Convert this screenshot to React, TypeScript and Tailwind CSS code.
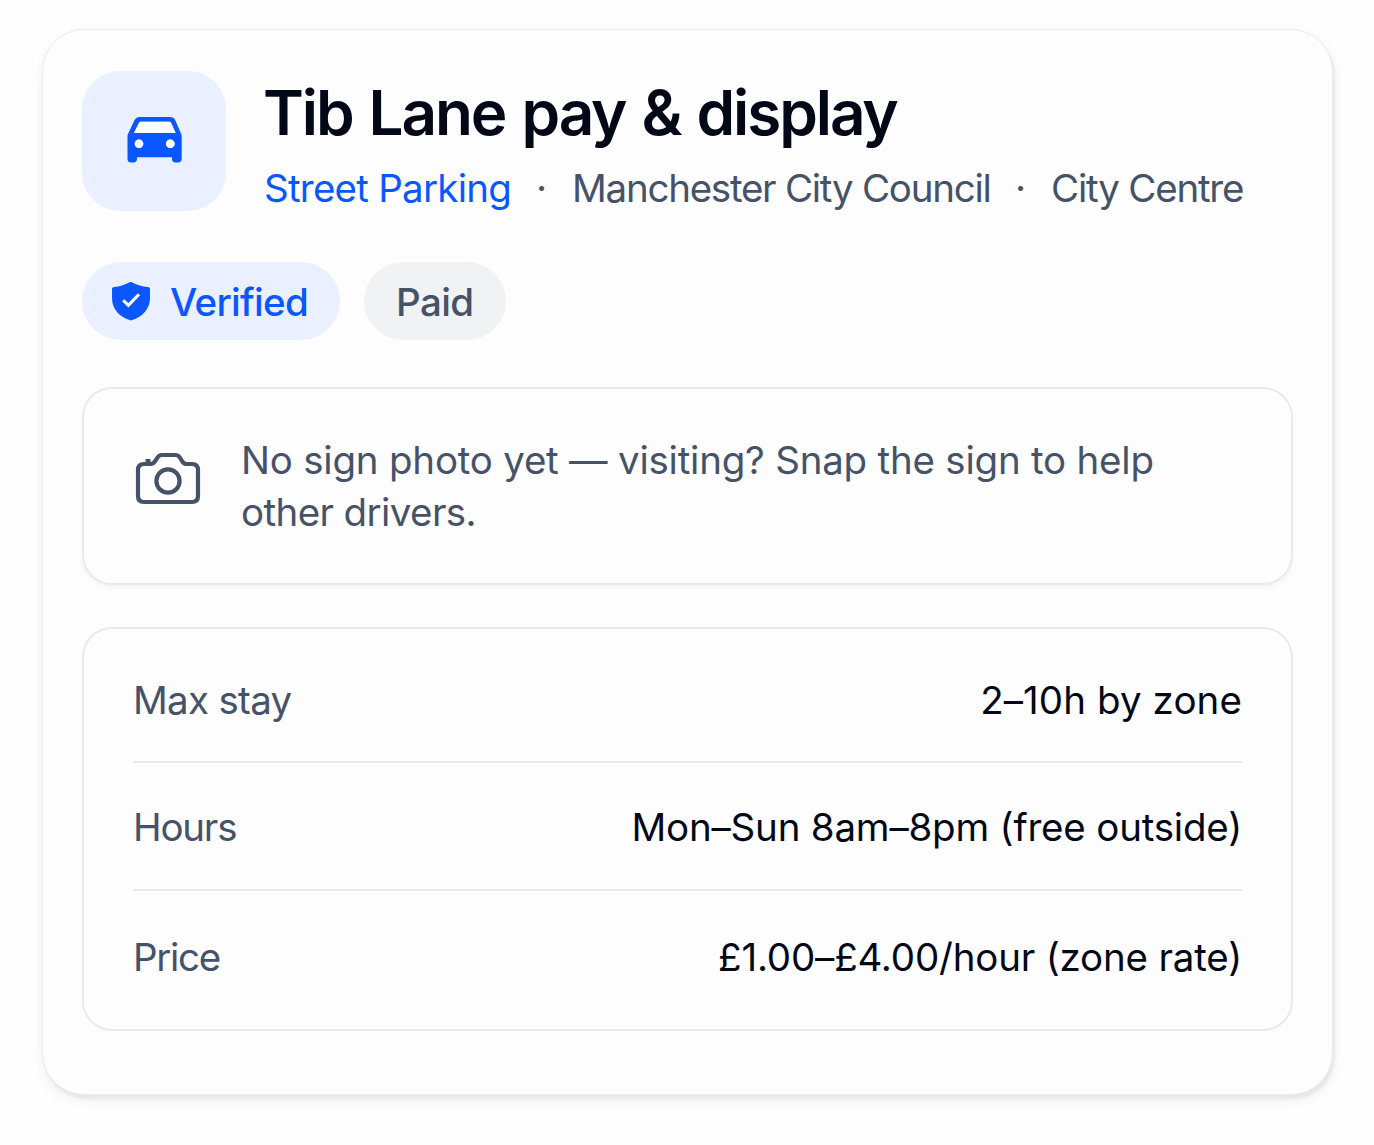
import React from "react";

function CarIcon() {
  return (
    <svg width="56" height="48" viewBox="0 0 56 48" className="ml-[2px] mt-[-2px]" aria-hidden="true">
      <path
        fill="#0b57ff"
        fillRule="evenodd"
        d="M12.8 1H43c3 0 4.500 1.300 5.500 3.800L54 17.500c.5 1 .7 1.700.7 3V43c0 2.200-1.600 3.600-3.600 3.600h-2.400c-2.600 0-3.700-1.400-3.700-3.600v-1.700H10V43c0 2.200-1.300 3.600-3.600 3.600H4C1.700 46.600.5 45.200.5 43V20.500c0-1.300.2-2 .7-3L7.200 4.800C8.300 2.300 9.800 1 12.800 1Zm.6 4.800c-.7 0-1 .3-1.300.9L7 17h41.600L44 6.700c-.3-.6-.6-.9-1.300-.9H13.400ZM12 23.400a4.300 4.300 0 1 0 0 8.600 4.300 4.300 0 0 0 0-8.600Zm31.300 0a4.300 4.300 0 1 0 0 8.600 4.300 4.300 0 0 0 0-8.600Z"
      />
      <g fill="#fbfcff">
        <path d="M13.400 5.800h29.300c.7 0 1 .3 1.300.9L48.600 17H7l5.100-10.300c.3-.6.600-.9 1.300-.9Z" />
        <circle cx="12" cy="27.700" r="4.300" />
        <circle cx="43.300" cy="27.700" r="4.300" />
      </g>
    </svg>
  );
}

function ShieldIcon() {
  return (
    <svg width="40" height="40" viewBox="0 0 40 40" className="shrink-0" aria-hidden="true">
      <path
        fill="#0b57ff"
        d="M18.600 1.200c.8-.4 1.500-.4 2.200 0 5 2.700 10.300 4.300 16 4.900 1.500.1 2.200.9 2.200 2.300V17c0 10.300-6.800 18.500-17.600 22.100-1 .4-1.900.4-2.800 0C7.500 35.300 1 27.300 1 17V8.400C1 7 1.600 6.200 3.100 6.100c5.500-.6 10.500-2.200 15.500-4.900Z"
      />
      <path fill="none" stroke="#fff" strokeWidth="3" d="m12.200 19.200 5.200 5.200L28 13.200" />
    </svg>
  );
}

function CameraIcon() {
  return (
    <svg
      width="68"
      height="56"
      viewBox="0 0 68 56"
      fill="none"
      stroke="#465268"
      strokeWidth="4.2"
      strokeLinejoin="round"
      className="shrink-0"
      aria-hidden="true"
    >
      <path d="M10 13h6.500c2.200 0 3.300-.8 4.500-2.600l2.600-4C24.800 4.600 26 4 28 4h13.500c2 0 3.200.7 4.300 2.500l2.500 4c1.200 1.800 2.300 2.500 4.500 2.500H58c3.900 0 6 2.100 6 6v26c0 4-2.100 6-6 6H10c-3.900 0-6-2-6-6V19c0-3.900 2.100-6 6-6Z" />
      <circle cx="34" cy="30" r="11.600" />
      <path d="M11.500 10.500h5" strokeWidth="5" />
    </svg>
  );
}

const rows = [
  { label: "Max stay", value: "2–10h by zone", height: "h-[110px] pb-[12px]", ls: "tracking-[-0.7px]", vs: "tracking-[0.1px]" },
  { label: "Hours", value: "Mon–Sun 8am–8pm (free outside)", height: "h-[126px] pt-[2px]", ls: "tracking-[-1.2px]", vs: "tracking-[-0.2px]" },
  { label: "Price", value: "£1.00–£4.00/hour (zone rate)", height: "h-[114px] pt-[18px]", ls: "tracking-[-1.3px]", vs: "tracking-[-0.18px]" },
];

export default function App() {
  return (
    <main className="h-[1145px] w-[1374px] bg-[#fefefe] pl-[42px] pt-[29px] font-['Inter',sans-serif] text-[38.5px] leading-[52px] text-[#465268]">
      <section className="h-[1066px] w-[1291px] rounded-[42px] border border-[#e9ebed] bg-[#fdfdfd] pl-[39px] pt-[41px] shadow-[2px_4px_2px_0px_#e7e9eb,1px_5px_12px_1px_rgba(15,23,42,0.06)]">
        <header className="flex h-[140px]">
          <div className="flex h-[140px] w-[144px] items-center justify-center rounded-[38px] bg-[#eaf0ff]">
            <CarIcon />
          </div>
          <div className="ml-[38px] pt-[4px]">
            <h1 className="-ml-px h-[76px] whitespace-nowrap text-[62px] font-semibold leading-[76px] tracking-[-2.1px] text-[#030817] [word-spacing:2.5px]">
              Tib Lane pay &amp; display
            </h1>
            <div className="mt-[11px] flex h-[52px] whitespace-nowrap">
              <span className="w-[307px] tracking-[-0.75px] text-[#0b57ff]">
                Street Parking
              </span>
              <span className="-ml-[35px] w-[36px]">·</span>
              <span className="w-[443px] tracking-[-1.25px]">Manchester City Council</span>
              <span className="w-[36px]">·</span>
              <span className="tracking-[-1.2px]">City Centre</span>
            </div>
          </div>
        </header>

        <div className="mt-[51px] flex gap-6 font-medium">
          <div className="flex h-[78px] w-[258px] items-center rounded-full bg-[#eaf0ff] pl-[29px] text-[#0b57ff]">
            <ShieldIcon />
            <span className="ml-[19px] mt-0.5 tracking-[-0.7px]">Verified</span>
          </div>
          <div className="flex h-[78px] w-[142px] items-center rounded-full bg-[#f1f2f4] pl-[32px] pt-0.5 tracking-[-0.6px]">
            Paid
          </div>
        </div>

        <div className="mt-[47px] flex h-[198px] w-[1211px] rounded-[30px] border-2 border-[#e8eaec] pl-[50px] pt-[45px] shadow-[0_3px_5px_rgba(15,23,42,0.04)]">
          <div className="mt-[17px]">
            <CameraIcon />
          </div>
          <p className="ml-[39px] whitespace-nowrap tracking-[-0.22px]">
            No sign photo yet — visiting? Snap the sign to help
            <br />
            <span className="tracking-[-0.6px]">other drivers.</span>
          </p>
        </div>

        <dl className="mt-[42px] h-[404px] w-[1211px] rounded-[30px] border-2 border-[#e8eaec] px-[49px] pt-[22px]">
          {rows.map((row, i) => (
            <React.Fragment key={row.label}>
              {i > 0 && <div className="h-[2px] bg-[#e9eaec]" />}
              <div className={`flex items-center justify-between whitespace-nowrap ${row.height}`}>
                <dt className={row.ls}>{row.label}</dt>
                <dd className={`text-[#030817] ${row.vs}`}>{row.value}</dd>
              </div>
            </React.Fragment>
          ))}
        </dl>
      </section>
    </main>
  );
}
